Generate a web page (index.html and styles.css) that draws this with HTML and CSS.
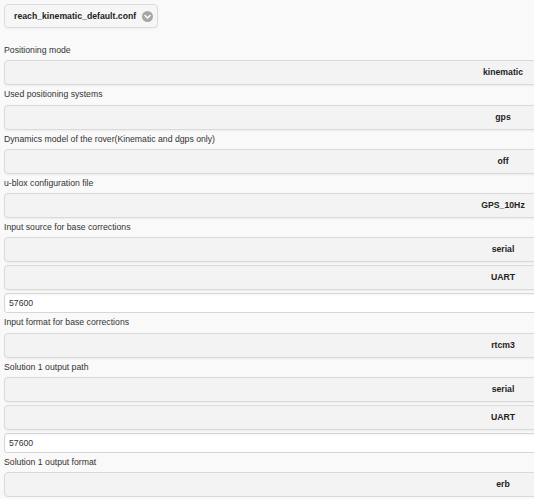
FILE: index.html
```html
<!DOCTYPE html>
<html>
<head>
<meta charset="utf-8">
<link rel="stylesheet" href="styles.css">
</head>
<body>
<div class="page">
  <div class="conf-btn">
    <span>reach_kinematic_default.conf</span>
    <span class="chev"><svg width="11" height="11" viewBox="0 0 11 11"><circle cx="5.5" cy="5.5" r="5.5" fill="#a6a6a6"/><path d="M3 4.5 L5.5 7 L8 4.5" fill="none" stroke="#fff" stroke-width="1.6" stroke-linecap="round" stroke-linejoin="round"/></svg></span>
  </div>
  <div class="form">
    <div class="label">Positioning mode</div>
    <div class="field">kinematic</div>
    <div class="label">Used positioning systems</div>
    <div class="field">gps</div>
    <div class="label">Dynamics model of the rover(Kinematic and dgps only)</div>
    <div class="field">off</div>
    <div class="label">u-blox configuration file</div>
    <div class="field">GPS_10Hz</div>
    <div class="label">Input source for base corrections</div>
    <div class="group">
      <div class="field">serial</div>
      <div class="field">UART</div>
      <div class="input">57600</div>
    </div>
    <div class="label">Input format for base corrections</div>
    <div class="field">rtcm3</div>
    <div class="label">Solution 1 output path</div>
    <div class="group">
      <div class="field">serial</div>
      <div class="field">UART</div>
      <div class="input">57600</div>
    </div>
    <div class="label">Solution 1 output format</div>
    <div class="field">erb</div>
  </div>
</div>
</body>
</html>
```
FILE: styles.css
```css
html, body {
  margin: 0;
  padding: 0;
  background: #f9f9f9;
  overflow: hidden;
}
body {
  font-family: "Liberation Sans", Arial, sans-serif;
  font-size: 8.7px;
  color: #333;
}
.page {
  width: 998px;
  padding: 4px 0 0 4px;
}
.conf-btn {
  display: inline-flex;
  align-items: center;
  gap: 6px;
  height: 22px;
  padding: 0 4px 0 9px;
  border: 1px solid #dcdcdc;
  border-radius: 4px;
  background: #f6f6f6;
  font-weight: bold;
  color: #222;
  box-shadow: 0 1px 1px rgba(0,0,0,0.04);
}
.chev {
  display: flex;
}
.form {
  display: flex;
  flex-direction: column;
  margin-top: 13px;
}
.group {
  display: flex;
  flex-direction: column;
  gap: 3px;
}
.label {
  height: 19.3px;
  line-height: 19px;
  color: #333;
}
.field {
  height: 23px;
  line-height: 23px;
  border: 1px solid #dadada;
  border-radius: 4px;
  background: #f3f3f3;
  text-align: center;
  font-weight: bold;
  color: #222;
  box-shadow: 0 1px 2px rgba(0,0,0,0.06);
}
.input {
  height: 18px;
  line-height: 18px;
  border: 1px solid #d6d6d6;
  border-radius: 3px;
  background: #fff;
  padding-left: 4px;
  color: #333;
  box-shadow: inset 0 1px 2px rgba(0,0,0,0.05);
}
```
